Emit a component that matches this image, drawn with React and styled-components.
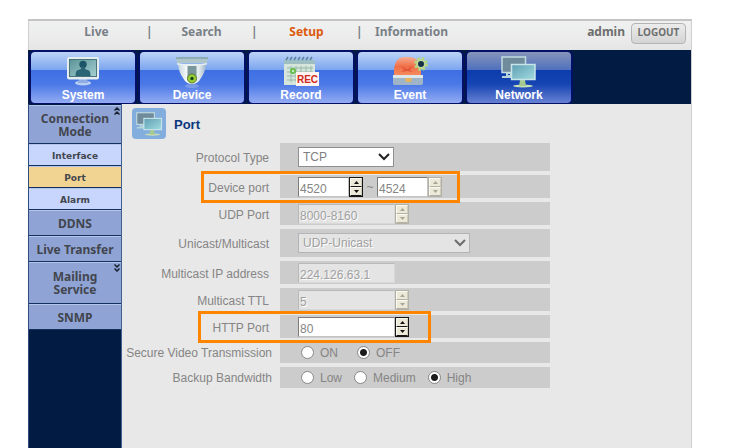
import { useState } from 'react';
import styled, { createGlobalStyle, css } from 'styled-components';

const menuItems = ['Live', 'Search', 'Setup', 'Information'];

const sections = [
  { name: 'System', Icon: SystemIcon },
  { name: 'Device', Icon: DeviceIcon },
  { name: 'Record', Icon: RecordIcon },
  { name: 'Event', Icon: EventIcon },
  { name: 'Network', Icon: NetworkIcon },
];

function App() {
  return (
    <>
      <GlobalStyle />
      <Frame>
        <TopBar>
          <Menu>
            {menuItems.map((item, index) => (
              <MenuItem key={item}>
                <MenuLink href='#' $active={item === 'Setup'}>
                  {item}
                </MenuLink>
                {index < menuItems.length - 1 && <Separator>|</Separator>}
              </MenuItem>
            ))}
          </Menu>
          <Account>
            <span>admin</span>
            <LogoutButton type='button'>LOGOUT</LogoutButton>
          </Account>
        </TopBar>
        <SectionNav>
          {sections.map(({ name, Icon }) => (
            <SectionButton
              key={name}
              type='button'
              $active={name === 'Network'}
            >
              <Icon />
              {name}
            </SectionButton>
          ))}
        </SectionNav>
        <Body>
          <Sidebar />
          <PortPage />
        </Body>
      </Frame>
    </>
  );
}

function Sidebar() {
  return (
    <SideNav>
      <SideLink href='#' $height={39}>
        Connection Mode
        <Expander>
          <DoubleChevron up />
        </Expander>
      </SideLink>
      <SubLink href='#'>Interface</SubLink>
      <SubLink href='#' $active>
        Port
      </SubLink>
      <SubLink href='#'>Alarm</SubLink>
      <SideLink href='#'>DDNS</SideLink>
      <SideLink href='#'>Live Transfer</SideLink>
      <SideLink href='#' $height={42}>
        Mailing Service
        <Expander>
          <DoubleChevron />
        </Expander>
      </SideLink>
      <SideLink href='#'>SNMP</SideLink>
    </SideNav>
  );
}

function PortPage() {
  const [secure, setSecure] = useState('OFF');
  const [bandwidth, setBandwidth] = useState('High');

  return (
    <Content>
      <PageTitle>
        <TitleIcon>
          <NetworkIcon small />
        </TitleIcon>
        <h1>Port</h1>
      </PageTitle>
      <Form>
        <Row $size='large'>
          <Label htmlFor='protocol'>Protocol Type</Label>
          <Cell>
            <Select id='protocol' width={96} options={['TCP', 'UDP']} />
          </Cell>
        </Row>
        <Row>
          <Label htmlFor='device-port'>Device port</Label>
          <Cell>
            <NumberField id='device-port' width={51} value='4520' />
            <Tilde>~</Tilde>
            <NumberField
              id='device-port-end'
              width={51}
              value='4524'
              label='Device port end'
              lockedButtons
            />
          </Cell>
          <Highlight $left={79} $width={259} />
        </Row>
        <Row>
          <Label htmlFor='udp-port'>UDP Port</Label>
          <Cell>
            <NumberField id='udp-port' width={97} value='8000-8160' disabled />
          </Cell>
        </Row>
        <Row $size='large'>
          <Label htmlFor='cast'>Unicast/Multicast</Label>
          <Cell>
            <Select
              id='cast'
              width={172}
              options={['UDP-Unicast', 'UDP-Multicast']}
              disabled
            />
          </Cell>
        </Row>
        <Row>
          <Label htmlFor='multicast-ip'>Multicast IP address</Label>
          <Cell>
            <TextInput
              id='multicast-ip'
              $width={97}
              defaultValue='224.126.63.1'
              disabled
            />
          </Cell>
        </Row>
        <Row>
          <Label htmlFor='ttl'>Multicast TTL</Label>
          <Cell>
            <NumberField id='ttl' width={97} value='5' disabled />
          </Cell>
        </Row>
        <Row>
          <Label htmlFor='http-port'>HTTP Port</Label>
          <Cell>
            <NumberField id='http-port' width={97} value='80' />
          </Cell>
          <Highlight $left={76} $width={233} />
        </Row>
        <Row $size='small'>
          <Label as='span' id='secure-label' $wide>
            Secure Video Transmission
          </Label>
          <RadioGroup
            name='secure'
            gap={19}
            options={['ON', 'OFF']}
            value={secure}
            onChange={setSecure}
          />
        </Row>
        <Row $size='small'>
          <Label as='span' id='bandwidth-label' $wide>
            Backup Bandwidth
          </Label>
          <RadioGroup
            name='bandwidth'
            gap={12}
            options={['Low', 'Medium', 'High']}
            value={bandwidth}
            onChange={setBandwidth}
          />
        </Row>
      </Form>
    </Content>
  );
}

function Select({ id, width, options, disabled }) {
  return (
    <SelectBox $width={width}>
      <select id={id} disabled={disabled}>
        {options.map((option) => (
          <option key={option}>{option}</option>
        ))}
      </select>
      <svg width='12' height='8' viewBox='0 0 12 8' aria-hidden='true'>
        <path
          d='M1 1l5 5 5-5'
          fill='none'
          stroke={disabled ? '#6d6d6d' : '#222'}
          strokeWidth='2'
        />
      </svg>
    </SelectBox>
  );
}

function NumberField({ id, width, value, label, disabled, lockedButtons }) {
  const locked = disabled || lockedButtons;
  return (
    <NumberBox>
      <TextInput
        id={id}
        $width={width}
        defaultValue={value}
        disabled={disabled}
        aria-label={label}
      />
      <Spinner $locked={locked}>
        <button type='button' disabled={locked} aria-label='Increase'>
          <svg width='5' height='3' viewBox='0 0 5 3'>
            <path d='M0 3L2.5 0 5 3z' fill='currentColor' />
          </svg>
        </button>
        <button type='button' disabled={locked} aria-label='Decrease'>
          <svg width='5' height='3' viewBox='0 0 5 3'>
            <path d='M0 0l2.5 3L5 0z' fill='currentColor' />
          </svg>
        </button>
      </Spinner>
    </NumberBox>
  );
}

function RadioGroup({ name, gap, options, value, onChange }) {
  return (
    <RadioCell role='radiogroup' aria-labelledby={`${name}-label`} $gap={gap}>
      {options.map((option) => (
        <RadioLabel key={option}>
          <input
            type='radio'
            name={name}
            checked={value === option}
            onChange={() => onChange(option)}
          />
          {option}
        </RadioLabel>
      ))}
    </RadioCell>
  );
}

function DoubleChevron({ up }) {
  return (
    <svg width='6' height='8' viewBox='0 0 6 8' aria-hidden='true'>
      <path
        d={
          up
            ? 'M.5 3.5L3 1l2.5 2.5M.5 7.5L3 5l2.5 2.5'
            : 'M.5 .5L3 3 5.5 .5M.5 4.5L3 7l2.5-2.5'
        }
        fill='none'
        stroke='#16202f'
        strokeWidth='1.5'
      />
    </svg>
  );
}

function SystemIcon() {
  return (
    <svg width='36' height='32' viewBox='0 0 36 32' aria-hidden='true'>
      <defs>
        <linearGradient id='sys-screen' x1='0' y1='0' x2='1' y2='1'>
          <stop offset='0' stopColor='#5d9498' />
          <stop offset='1' stopColor='#a4cfd2' />
        </linearGradient>
      </defs>
      <ellipse cx='18' cy='27' rx='8' ry='2.5' fill='#b7cdf2' />
      <path d='M14 23h8l1 4H13z' fill='#8eabe2' />
      <rect x='2' y='1' width='32' height='22.5' rx='2' fill='#e3edf0' />
      <rect x='4.5' y='3.5' width='27' height='17' fill='url(#sys-screen)' stroke='#4b7478' />
      <circle cx='18' cy='8.5' r='3.7' fill='#1d5568' />
      <path d='M16 11h4v2l4 1.5q1.5 1 1.5 5.5h-15q0-4.5 1.5-5.5l4-1.5z' fill='#2a6475' />
    </svg>
  );
}

function DeviceIcon() {
  return (
    <svg width='36' height='32' viewBox='0 0 36 32' aria-hidden='true'>
      <defs>
        <linearGradient id='dome' x1='0' y1='0' x2='1' y2='0'>
          <stop offset='0' stopColor='#c3d5de' />
          <stop offset='.3' stopColor='#f4f8f8' />
          <stop offset='.75' stopColor='#e2ebec' />
          <stop offset='1' stopColor='#9eb6cc' />
        </linearGradient>
      </defs>
      <ellipse cx='18' cy='30' rx='7' ry='2' fill='#7899e8' />
      <path d='M4 8h28q-1 9-5 14-3 6-9 6t-9-6Q5 17 4 8z' fill='url(#dome)' />
      <path d='M2 1h32l-1 6H3z' fill='#b0c5ca' />
      <path d='M2 1h32v2H2z' fill='#8faeb4' />
      <path d='M3 7q15 3 30 0v1.5q-15 3-30 0z' fill='#e5eeee' />
      <path d='M13.5 10h9v12q-4.5 3-9 0z' fill='#7a989b' />
      <circle cx='18' cy='22.5' r='4.5' fill='#9bcf34' stroke='#587a35' />
      <circle cx='18' cy='22.5' r='1.7' fill='#174818' />
    </svg>
  );
}

function RecordIcon() {
  return (
    <svg width='36' height='32' viewBox='0 0 36 32' aria-hidden='true'>
      <path d='M1 4h31v22l-3 3H1z' fill='#d5e5dc' />
      <path d='M1 4h31v4H1z' fill='#9dbec3' />
      <path
        d='M4 12h26M4 16h26M4 20h26M4 24h26M8 10v16M13 10v16M18 10v16M23 10v16M28 10v16'
        stroke='#99b9aa'
      />
      <path
        d='M3 4l2-3M7 4l2-3M11 4l2-3M15 4l2-3M19 4l2-3M23 4l2-3M27 4l2-3'
        stroke='#5a8297'
        strokeWidth='1.5'
      />
      <circle cx='10' cy='15' r='3' fill='#68bd4c' />
      <circle cx='10' cy='15' r='1' fill='#e8fadf' />
      <rect x='13' y='16' width='23' height='14' fill='#fff4ef' />
      <text
        x='24.5'
        y='27'
        textAnchor='middle'
        fontFamily='Liberation Sans, sans-serif'
        fontSize='10'
        fontWeight='700'
        fill='#cd2a22'
      >
        REC
      </text>
    </svg>
  );
}

function EventIcon() {
  return (
    <svg width='36' height='32' viewBox='0 0 36 32' aria-hidden='true'>
      <defs>
        <linearGradient id='siren' x1='0' y1='0' x2='0' y2='1'>
          <stop offset='0' stopColor='#f5ad91' />
          <stop offset='.5' stopColor='#f06e46' />
          <stop offset='1' stopColor='#f58e61' />
        </linearGradient>
      </defs>
      <path d='M2 20v-6Q3 1 13 1h4q10 0 12 13v6z' fill='url(#siren)' />
      <path d='M9 10l6 3 6-3-3 4 3 2-6-1-6 1 3-2z' fill='#e2573a' />
      <path d='M1 19h30v8q0 2-2 2H2q-1 0-1-2z' fill='#9fb4c6' />
      <path d='M1 19h30v3H1z' fill='#dbe7eb' />
      <path d='M13 22h7l-1 4h-5z' fill='#e6b45f' />
      <circle cx='29' cy='8' r='5' fill='#c0dc9c' />
      <circle
        cx='29'
        cy='8'
        r='5.5'
        fill='none'
        stroke='#b4d783'
        strokeWidth='3'
        strokeDasharray='2.5 1.82'
      />
      <circle cx='29' cy='8' r='3' fill='#16324a' />
    </svg>
  );
}

function NetworkIcon({ small }) {
  return (
    <svg
      width={small ? 27 : 36}
      height={small ? 24 : 32}
      viewBox='0 0 36 32'
      aria-hidden='true'
    >
      <defs>
        <linearGradient id='net-screen' x1='0' y1='0' x2='1' y2='1'>
          <stop offset='0' stopColor='#5f9fb3' />
          <stop offset='1' stopColor='#a1dbe0' />
        </linearGradient>
      </defs>
      <path d='M1 21h9M6 17h4v3H6z' stroke='#b5d5db' strokeWidth='2' fill='none' />
      <rect x='1' y='1' width='23.5' height='15.5' fill='#6f8b9c' stroke='#c2dce0' strokeWidth='1.5' />
      <ellipse cx='22' cy='30' rx='10' ry='1.5' fill='#c7dfb8' />
      <path d='M19 24h5l1 6h-7z' fill='#a5c98e' />
      <rect x='10.5' y='8.5' width='23.5' height='15' fill='url(#net-screen)' stroke='#c7e5e9' strokeWidth='1.5' />
    </svg>
  );
}

const GlobalStyle = createGlobalStyle`
  * {
    box-sizing: border-box;
  }
  body {
    margin: 0;
    background: #fff;
    font-family: 'Liberation Sans', Arial, sans-serif;
    font-size: 12px;
  }
  a {
    color: inherit;
    text-decoration: none;
  }
  button, input, select {
    font-family: inherit;
    margin: 0;
  }
`;

const Frame = styled.div`
  display: flex;
  flex-direction: column;
  min-height: calc(100vh - 19px);
  margin: 19px 57px 0 28px;
  border-top: 2px solid #c4c4c4;
  border-right: 1px solid #cfcfcf;
`;

const TopBar = styled.header`
  display: flex;
  justify-content: space-between;
  height: 29px;
  padding: 0 5px 0 18px;
  border-left: 1px solid #cfcfcf;
  background: linear-gradient(#eff1f0, #ebeceb 55%, #e4e5e4);
  color: #7a7f87;
  font-family: 'Noto Sans', 'Open Sans', sans-serif;
  font-weight: 700;
`;

const Menu = styled.nav`
  display: flex;
  height: 21px;
`;

const MenuItem = styled.div`
  display: flex;
  align-items: center;
`;

const MenuLink = styled.a`
  width: 99px;
  text-align: center;
  color: ${({ $active }) => ($active ? '#dd5a0c' : 'inherit')};
`;

const Separator = styled.span`
  width: 6px;
  text-align: center;
`;

const Account = styled.div`
  display: flex;
  align-items: center;
  gap: 6px;
  height: 21px;
  color: #6e6e6e;
`;

const LogoutButton = styled.button`
  align-self: flex-start;
  height: 21px;
  width: 55px;
  margin-top: 2px;
  padding: 0 0 3px;
  border: 1px solid #b4b4b4;
  border-radius: 4px;
  background: linear-gradient(#ececec, #d4d4d4);
  color: #707070;
  font-size: 10px;
  font-weight: 700;
`;

const SectionNav = styled.nav`
  display: flex;
  gap: 5px;
  height: 54px;
  padding: 2px 3px 1px;
  background: #011b43;
`;

const SectionButton = styled.button`
  display: flex;
  flex-direction: column;
  align-items: center;
  width: 104px;
  padding: 4px 0 0;
  border: 0;
  border-radius: 4px;
  box-shadow: 0 0 0 2px #040f66;
  color: #fff;
  font-size: 12px;
  font-weight: 700;
  line-height: 15px;
  background: ${({ $active }) =>
    $active
      ? 'linear-gradient(#8594bb, #4f70bd 18px, #0c3bab 18px, #1544b3 32px, #6781d3)'
      : 'linear-gradient(#bdd3f7, #7ba5ef 18px, #3e6fe3 18px, #4a78e6 32px, #93abf3)'};
`;

const Body = styled.div`
  display: flex;
  flex: 1;
`;

const SideNav = styled.nav`
  width: 94px;
  padding-top: 1px;
  border-left: 1px solid #2e4d7c;
  border-right: 1px solid #40618f;
  background: #011b43;
`;

const sideItem = css`
  display: flex;
  align-items: center;
  justify-content: center;
  border-top: 1px solid #b4c5ea;
  border-bottom: 1px solid #14305e;
  color: #42464e;
  font-weight: 700;
  text-align: center;
`;

const SideLink = styled.a`
  ${sideItem}
  position: relative;
  height: ${({ $height }) => $height || 26}px;
  padding: 0 10px;
  background: #90a3d5;
  font-family: 'Noto Sans', 'Open Sans', sans-serif;
  font-size: 12px;
  line-height: 13px;
  white-space: ${({ $height }) => ($height ? 'normal' : 'nowrap')};
`;

const SubLink = styled.a`
  ${sideItem}
  height: 22px;
  padding-top: 2px;
  background: ${({ $active }) => ($active ? '#f2d492' : '#c8d6fd')};
  font-family: 'DejaVu Sans', sans-serif;
  font-size: 9px;
`;

const Expander = styled.span`
  position: absolute;
  top: 1px;
  right: 1px;
  display: flex;
`;

const Content = styled.main`
  flex: 1;
  padding: 4px 0 40px;
  background: #e8e8e8;
`;

const PageTitle = styled.div`
  display: flex;
  align-items: center;
  gap: 8px;
  height: 31px;
  padding-left: 10px;

  h1 {
    margin: 2px 0 0;
    color: #08367f;
    font-size: 13px;
  }
`;

const TitleIcon = styled.span`
  display: flex;
  align-items: center;
  justify-content: center;
  width: 34px;
  height: 31px;
  border-radius: 4px;
  background: #83addd;
`;

const Form = styled.form`
  display: flex;
  flex-direction: column;
  gap: 4px;
  margin-top: 4px;
  color: #858585;
`;

const rowHeights = { large: 28, small: 21 };

const Row = styled.div`
  position: relative;
  display: grid;
  grid-template-columns: 158px minmax(0, 270px);
  height: ${({ $size }) => rowHeights[$size] || 23}px;
`;

const Label = styled.label`
  align-self: center;
  padding-top: ${({ $wide }) => ($wide ? 0 : 2)}px;
  padding-right: ${({ $wide }) => ($wide ? 8 : 11)}px;
  text-align: right;
  white-space: nowrap;
`;

const Cell = styled.div`
  display: flex;
  align-items: center;
  padding-left: 18px;
  background: #ccc;
`;

const Highlight = styled.span`
  position: absolute;
  z-index: 1;
  top: -4px;
  bottom: -5px;
  left: ${({ $left }) => $left}px;
  width: ${({ $width }) => $width}px;
  border: 3px solid #ff8400;
  pointer-events: none;
`;

const SelectBox = styled.span`
  display: grid;
  align-items: center;
  width: ${({ $width }) => $width}px;

  select,
  svg {
    grid-area: 1 / 1;
  }

  select {
    appearance: none;
    width: 100%;
    height: 20px;
    padding: 0 20px 0 4px;
    border: 1px solid #8f8f8f;
    border-radius: 0;
    background: #fff;
    color: #808080;
    font-size: 12px;
    opacity: 1;
  }

  select:disabled {
    border-color: #b4b4b4;
    background: #e4e4e4;
    color: #a0a0a0;
    text-shadow: 1px 1px #fff;
  }

  svg {
    justify-self: end;
    margin-right: 4px;
    pointer-events: none;
  }
`;

const NumberBox = styled.span`
  display: flex;
  align-items: center;
`;

const TextInput = styled.input`
  width: ${({ $width }) => $width}px;
  height: 20px;
  padding: 5px 1px 0;
  border: 1px solid #7c7c7c;
  border-right-color: #c4c4c4;
  border-bottom-color: #c4c4c4;
  border-radius: 0;
  background: #fff;
  color: #858585;
  font-size: 12px;
  line-height: 13px;

  &:disabled {
    border-color: #b9b9b9 #d8d8d8 #d8d8d8 #b9b9b9;
    background: #e4e4e4;
    color: #a0a0a0;
    text-shadow: 1px 1px #fff;
  }
`;

const Spinner = styled.span`
  display: grid;
  grid-template-rows: 1fr 1fr;
  width: 14px;
  height: 20px;
  border: 1px solid ${({ $locked }) => ($locked ? '#b3b1a6' : '#151515')};
  background: ${({ $locked }) => ($locked ? '#b3b1a6' : '#151515')};

  button {
    display: flex;
    align-items: center;
    justify-content: center;
    padding: 0;
    border: 1px solid;
    border-color: #fbfaf2 #cfccbd
      ${({ $locked }) => ($locked ? '#b3b1a6' : '#151515')} #fbfaf2;
    background: #ece9d8;
    color: ${({ $locked }) => ($locked ? '#a8a697' : '#111')};
  }
`;

const Tilde = styled.span`
  width: 14px;
  text-align: center;
`;

const RadioCell = styled(Cell)`
  gap: ${({ $gap }) => $gap}px;
  padding-left: 21px;
`;

const RadioLabel = styled.label`
  display: flex;
  align-items: center;
  gap: 6px;

  input {
    appearance: none;
    width: 13px;
    height: 13px;
    border: 1px solid #888;
    border-radius: 50%;
    background: #fff;
  }

  input:checked {
    background: radial-gradient(circle, #1c1c1c 3px, #fff 4px);
  }
`;

export default App;
